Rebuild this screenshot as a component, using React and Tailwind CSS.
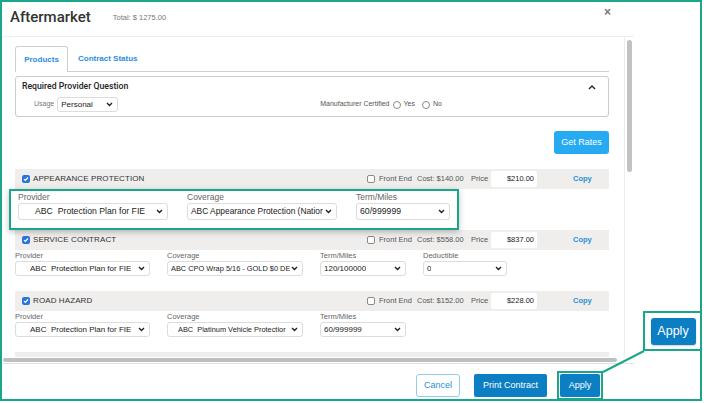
import React from 'react';

const TEAL = 'border-[#19a68a]';

const Chevron = () => (
  <svg width="7" height="5" viewBox="0 0 7 5" className="shrink-0">
    <path d="M1 1l2.5 2.5L6 1" fill="none" stroke="#222" strokeWidth="1.4" />
  </svg>
);

const Select = ({ className, text }) => (
  <div className={`flex items-center justify-between bg-white border border-[#dcdcdc] rounded-[3px] pr-[4px] text-[#222] ${className}`}>
    <span className="overflow-hidden whitespace-pre">{text}</span>
    <Chevron />
  </div>
);

const CheckBox = ({ checked }) =>
  checked ? (
    <span className="w-[8px] h-[8px] rounded-[2px] bg-[#2b73dd] flex items-center justify-center shrink-0">
      <svg width="6" height="6" viewBox="0 0 6 6">
        <path d="M1 3.2l1.3 1.3L5 1.5" fill="none" stroke="#fff" strokeWidth="1.2" />
      </svg>
    </span>
  ) : (
    <span className="w-[8px] h-[8px] rounded-[2px] border border-[#8a8a8a] bg-white shrink-0" />
  );

const ProductHeader = ({ name, cost, price }) => (
  <div className="h-[20px] bg-[#efeeec] flex items-center shrink-0">
    <div className="flex-1 flex items-center pl-[7px]">
      <CheckBox checked />
      <span className="ml-[3px] text-[8px] font-medium text-[#333] tracking-[0.1px]">{name}</span>
    </div>
    <div className="w-[242px] flex items-center text-[7.5px] text-[#555]">
      <CheckBox />
      <span className="ml-[4px] w-[38px]">Front End</span>
      <span className="w-[54px]">Cost: {cost}</span>
      <span className="w-[20px]">Price</span>
      <span className="w-[46px] h-[16px] bg-white rounded-[2px] flex items-center justify-end pr-[3px] text-[#222]">{price}</span>
      <span className="ml-[36px] font-bold text-[#1f8fd8]">Copy</span>
    </div>
  </div>
);

const Field = ({ label, className, text }) => (
  <div className="flex flex-col">
    <span className="h-[10px] leading-[10px] text-[7.5px] text-[#666]">{label}</span>
    <Select className={`h-[15px] ${className}`} text={text} />
  </div>
);

const FieldRow = ({ coverage, term, pad, deductible }) => (
  <div className="flex gap-[17px] pt-[1px] h-[41px] shrink-0">
    <Field label="Provider" className="w-[135px] pl-[14px] text-[8px]" text="ABC  Protection Plan for FIE" />
    <Field label="Coverage" className={`w-[136px] ${pad}`} text={coverage} />
    <Field label="Term/Miles" className="w-[86px] pl-[3px] text-[8px]" text={term} />
    {deductible && <Field label="Deductible" className="w-[84px] pl-[3px] text-[8px]" text={deductible} />}
  </div>
);

export default function App() {
  return (
    <div className="w-[704px] h-[403px] bg-white" style={{ fontFamily: '"Liberation Sans", Arial, sans-serif' }}>
      <div className={`relative w-[702px] h-[401px] border-2 ${TEAL} flex flex-col overflow-hidden`}>
        {/* header */}
        <div className="h-[34px] flex items-center pl-[8px] pb-[3px] shrink-0">
          <span className="text-[15px] font-medium text-[#333]" style={{ fontFamily: 'Roboto, sans-serif' }}>Aftermarket</span>
          <span className="ml-[22px] text-[7.5px] text-[#777] mt-[1px]">Total: $ 1275.00</span>
          <span className="ml-auto mr-[89px] -mt-[12px] text-[12px] font-bold text-[#777]">×</span>
        </div>

        {/* scroll pane */}
        <div className="w-[632px] h-[328px] border-t border-[#eeeeee] flex flex-col shrink-0">
          <div className="flex h-[320px]">
            <div className="w-[622px] h-full overflow-hidden flex flex-col pl-[13px] pr-[15px] pt-[9px]">
              {/* tabs */}
              <div className="flex h-[26px] shrink-0">
                <div className="w-[53px] h-full border border-b-0 border-[#cfcfcf] rounded-t-[3px] flex items-center justify-center text-[8px] font-bold text-[#2b8de0]">
                  Products
                </div>
                <div className="flex-1 border-b border-[#cfcfcf] flex items-center pl-[10px] text-[8px] font-bold text-[#2b8de0]">
                  Contract Status
                </div>
              </div>

              {/* question box */}
              <div className="mt-[4px] h-[41px] border border-[#cccccc] rounded-[3px] px-[6px] pt-[4px] shrink-0 relative">
                <div className="flex items-center h-[12px]">
                  <span className="text-[8.7px] font-medium text-[#222]" style={{ fontFamily: 'Roboto, sans-serif' }}>Required Provider Question</span>
                  <svg width="8" height="5" viewBox="0 0 8 5" className="ml-auto mr-[6px]">
                    <path d="M1 4l3-3 3 3" fill="none" stroke="#222" strokeWidth="1.4" />
                  </svg>
                </div>
                <div className="flex items-center mt-[4px] h-[15px]">
                  <span className="ml-[12px] text-[7px] text-[#777]">Usage</span>
                  <Select className="ml-[3px] w-[61px] h-[15px] pl-[3px] text-[8px]" text="Personal" />
                  <div className="ml-[202px] flex items-center text-[7px] text-[#555]">
                    <span>Manufacturer Certified</span>
                    <span className="ml-[3px] w-[8px] h-[8px] rounded-full border border-[#8a8a8a]" />
                    <span className="ml-[3px]">Yes</span>
                    <span className="ml-[7px] w-[8px] h-[8px] rounded-full border border-[#8a8a8a]" />
                    <span className="ml-[3px]">No</span>
                  </div>
                </div>
              </div>

              <div className="flex justify-end mt-[14px] shrink-0">
                <button className="w-[55px] h-[23px] rounded-[3px] bg-[#26aaf2] text-white text-[9px]">Get Rates</button>
              </div>

              {/* products */}
              <div className="mt-[15px] flex flex-col">
                <ProductHeader name="APPEARANCE PROTECTION" cost="$140.00" price="$210.00" />
                <div className={`relative z-10 -ml-[6px] w-[450px] h-[41px] border-2 ${TEAL} bg-white shadow-[0_2px_6px_rgba(0,0,0,0.25)] flex gap-[19px] pl-[7px] pt-[1px] shrink-0`}>
                  <div className="flex flex-col">
                    <span className="h-[11px] leading-[11px] text-[8.5px] text-[#666]">Provider</span>
                    <Select className="w-[150px] h-[17px] pl-[16px] text-[8.7px]" text="ABC  Protection Plan for FIE" />
                  </div>
                  <div className="flex flex-col">
                    <span className="h-[11px] leading-[11px] text-[8.5px] text-[#666]">Coverage</span>
                    <Select className="w-[150px] h-[17px] pl-[3px] text-[8.4px]" text="ABC Appearance Protection (Natior" />
                  </div>
                  <div className="flex flex-col">
                    <span className="h-[11px] leading-[11px] text-[8.5px] text-[#666]">Term/Miles</span>
                    <Select className="w-[94px] h-[17px] pl-[3px] text-[8.7px]" text="60/999999" />
                  </div>
                </div>

                <ProductHeader name="SERVICE CONTRACT" cost="$558.00" price="$837.00" />
                <FieldRow coverage="ABC CPO Wrap 5/16 - GOLD $0 DE" pad="pl-[3px] text-[7.4px]" term="120/100000" deductible="0" />

                <ProductHeader name="ROAD HAZARD" cost="$152.00" price="$228.00" />
                <FieldRow coverage="ABC  Platinum Vehicle Protectior" pad="pl-[10px] text-[7.4px]" term="60/999999" />

                <div className="h-[20px] bg-[#efeeec] shrink-0" />
              </div>
            </div>

            {/* vertical scrollbar */}
            <div className="w-[10px] h-full border-l border-[#ececec]">
              <div className="ml-[2px] mt-[3px] w-[5px] h-[132px] rounded-full bg-[#c2c2c2]" />
            </div>
          </div>

          {/* horizontal scrollbar */}
          <div className="h-[7px] border-b border-[#e2e2e2] pt-[1px] pl-[1px] shrink-0">
            <div className="w-[614px] h-[4px] rounded-full bg-[#bfbfbf]" />
          </div>
        </div>

        {/* footer */}
        <div className="flex items-start justify-end pr-[97px] pt-[7px] shrink-0">
          <button className="mt-[3px] w-[44px] h-[23px] rounded-[3px] border border-[#93cbee] bg-white text-[9px] text-[#2a8fd6]">Cancel</button>
          <button className="mt-[3px] ml-[14px] w-[73px] h-[23px] rounded-[2px] bg-[#0b7ec4] text-white text-[9px]">Print Contract</button>
          <div className={`ml-[10px] border-2 ${TEAL} p-[1px]`}>
            <button className="block w-[40px] h-[23px] rounded-[2px] bg-[#0b7ec4] text-white text-[9px]">Apply</button>
          </div>
        </div>

        {/* magnified callout */}
        <svg className="absolute left-0 top-0 pointer-events-none" width="702" height="401">
          <line x1="642" y1="349" x2="601" y2="370" stroke="#19a68a" strokeWidth="2" />
        </svg>
        <div className={`absolute left-[641px] top-[309px] w-[60px] h-[40px] border-2 ${TEAL} bg-white flex items-center justify-center`}>
          <button className="w-[45px] h-[27px] rounded-[3px] bg-[#0b7ec4] text-white text-[12.5px] shadow-[0_1px_2px_rgba(0,0,0,0.2)]">Apply</button>
        </div>
      </div>
    </div>
  );
}
